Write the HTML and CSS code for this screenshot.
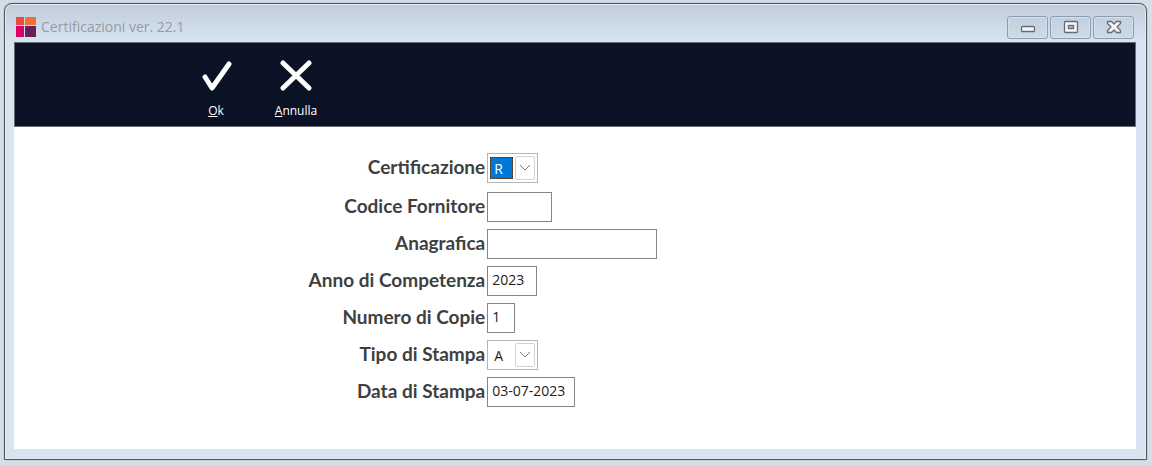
FILE: index.html
```html
<!DOCTYPE html>
<html lang="it">

<head>
    <meta charset="UTF-8">
    <meta name="viewport" content="width=device-width, initial-scale=1.0">
    <title>Certificazioni ver. 22.1</title>
    <link rel="stylesheet" href="styles.css">
</head>

<body>
    <div class="window">
        <header class="title-bar">
            <svg class="logo" viewBox="0 0 20 20" aria-hidden="true">
                <rect x="0" y="0" width="8" height="8" fill="#e94b40"/>
                <rect x="9" y="0" width="11" height="8" fill="#f07035"/>
                <rect x="0" y="9" width="8" height="11" fill="#dc0063"/>
                <rect x="9" y="9" width="11" height="11" fill="#68205a"/>
            </svg>
            <h1 class="title">Certificazioni ver. 22.1</h1>
            <div class="window-buttons">
                <button class="window-btn" type="button" aria-label="Riduci a icona">
                    <svg viewBox="0 0 16 14"><rect x="1.5" y="6.5" width="13" height="5" rx="1" fill="#f5f5f5" stroke="#666b78" stroke-width="1.3"/></svg>
                </button>
                <button class="window-btn" type="button" aria-label="Ingrandisci">
                    <svg viewBox="0 0 16 14">
                        <rect x="1.500" y="1.500" width="13" height="11" rx="1" fill="#f5f5f5" stroke="#666b78" stroke-width="1.3"/>
                        <rect x="5.500" y="5.500" width="5" height="3" fill="#b4c0ce" stroke="#666b78" stroke-width="1.3"/>
                    </svg>
                </button>
                <button class="window-btn" type="button" aria-label="Chiudi">
                    <svg viewBox="0 0 16 14">
                        <path d="M1.500 1.500h4L8 4l2.500-2.500h4v2L11 7l3.500 3.500v2h-4L8 10l-2.500 2.500h-4v-2L5 7 1.500 3.500z" fill="#f5f5f5" stroke="#666b78" stroke-width="1.3" stroke-linejoin="round"/>
                    </svg>
                </button>
            </div>
        </header>

        <main class="content">
            <div class="toolbar">
                <button class="tool" type="submit" form="printForm">
                    <svg viewBox="0 0 32 32"><path d="M5 18l7 11L29 5"/></svg>
                    <span><u>O</u>k</span>
                </button>
                <button class="tool" type="reset" form="printForm">
                    <svg viewBox="0 0 32 32"><path d="M3 4l26 25M29 4L3 29"/></svg>
                    <span><u>A</u>nnulla</span>
                </button>
            </div>

            <form id="printForm" class="form" onsubmit="return false">
                <div class="row row-first">
                    <label for="certificazione">Certificazione</label>
                    <div class="combo">
                        <select id="certificazione" class="selected">
                            <option>R</option>
                        </select>
                        <span class="arrow"><svg viewBox="0 0 12 8"><path d="M1 1l5 5 5-5"/></svg></span>
                    </div>
                </div>
                <div class="row">
                    <label for="fornitore">Codice Fornitore</label>
                    <input type="text" id="fornitore" class="w-code">
                </div>
                <div class="row">
                    <label for="anagrafica">Anagrafica</label>
                    <input type="text" id="anagrafica" class="w-name">
                </div>
                <div class="row">
                    <label for="anno">Anno di Competenza</label>
                    <input type="text" id="anno" class="w-year" value="2023">
                </div>
                <div class="row">
                    <label for="copie">Numero di Copie</label>
                    <input type="text" id="copie" class="w-copies" value="1">
                </div>
                <div class="row">
                    <label for="tipo">Tipo di Stampa</label>
                    <div class="combo">
                        <select id="tipo">
                            <option>A</option>
                        </select>
                        <span class="arrow"><svg viewBox="0 0 12 8"><path d="M1 1l5 5 5-5"/></svg></span>
                    </div>
                </div>
                <div class="row">
                    <label for="data">Data di Stampa</label>
                    <input type="text" id="data" class="w-date" value="03-07-2023">
                </div>
            </form>
        </main>
    </div>
</body>

</html>
```
FILE: styles.css
```css
* {
    box-sizing: border-box;
    margin: 0;
    padding: 0;
}

body {
    background-color: #d2dfe8;
    display: flex;
    min-height: 100vh;
    padding: 3px 5px 5px 4px;
    font-family: "Open Sans", "Noto Sans", sans-serif;
}

.window {
    flex: 1;
    display: flex;
    flex-direction: column;
    background: linear-gradient(#bfcddb, #d7e4f2 38px);
    border: 1px solid #55565a;
    border-radius: 8px 8px 0 0;
    box-shadow: inset 0 0 0 1px #e2ebf4, 0 0 1px #55565a;
    padding: 0 10px 10px 9px;
}

.title-bar {
    display: flex;
    align-items: center;
    height: 38px;
    padding: 8px 2px 0 2px;
}

.logo {
    width: 20px;
    height: 20px;
}

.title {
    flex: 1;
    margin-left: 5px;
    font-size: 14px;
    font-weight: normal;
    line-height: 20px;
    color: #989ba1;
}

.window-buttons {
    display: flex;
    gap: 2px;
}

.window-btn {
    display: flex;
    align-items: center;
    justify-content: center;
    width: 41px;
    height: 23px;
    background: linear-gradient(#c3d0de, #cddae8);
    border: 1px solid #8d9bb5;
    border-radius: 3px;
    box-shadow: inset 0 0 0 1px #d5e0ec;
}

.window-btn svg {
    width: 16px;
    height: 14px;
}

.content {
    flex: 1;
    background-color: #fff;
}

.toolbar {
    display: flex;
    gap: 8px;
    height: 85px;
    padding: 16px 0 0 165px;
    background-color: #0c1226;
    border: 1px solid #6a6c72;
}

.tool {
    display: flex;
    flex-direction: column;
    align-items: center;
    justify-content: flex-start;
    gap: 12px;
    width: 72px;
    background: none;
    border: none;
    color: #fff;
    font-family: inherit;
    font-size: 12px;
    line-height: 16px;
}

.tool svg {
    width: 32px;
    height: 32px;
    fill: none;
    stroke: #fff;
    stroke-width: 5;
    stroke-linecap: round;
    stroke-linejoin: round;
}

.form {
    display: flex;
    flex-direction: column;
    gap: 7px;
    padding-top: 26px;
}

.row {
    display: grid;
    grid-template-columns: 42% auto;
    justify-content: start;
    align-items: center;
    column-gap: 2px;
}

.row-first {
    margin-bottom: 2px;
}

label {
    padding-bottom: 2px;
    text-align: right;
    font-family: Lato, sans-serif;
    font-size: 19px;
    font-weight: bold;
    line-height: 24px;
    color: #404040;
}

input,
.combo {
    height: 30px;
    background-color: #fff;
    border: 1px solid #858585;
}

input {
    padding: 0 4px 4px;
}

input,
select {
    font-family: inherit;
    font-size: 14px;
    color: #222;
}

.w-code {
    width: 65px;
}

.w-name {
    width: 170px;
}

.w-year {
    width: 50px;
}

.w-copies {
    width: 28px;
}

.w-date {
    width: 88px;
}

.combo {
    display: flex;
    gap: 2px;
    width: 51px;
    padding: 2px;
    border-color: #b4b4ba;
}

select {
    appearance: none;
    width: 23px;
    margin: 1px 0;
    padding-left: 4px;
    background: none;
    border: none;
    border-radius: 0;
}

select.selected {
    background-color: #0078d7;
    border: 1px dotted #3d2a18;
    padding-left: 3px;
    color: #fff;
}

.arrow {
    flex: 1;
    display: flex;
    align-items: center;
    justify-content: center;
    border: 1px solid #d2d2d2;
    border-radius: 2px;
    pointer-events: none;
}

.arrow svg {
    width: 12px;
    height: 8px;
    fill: none;
    stroke: #777;
}
```
